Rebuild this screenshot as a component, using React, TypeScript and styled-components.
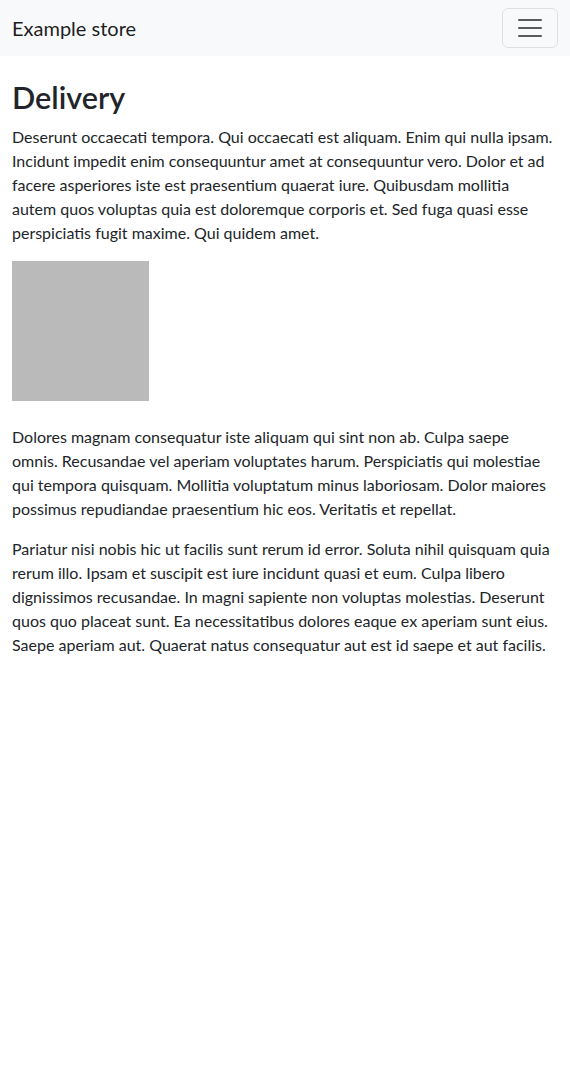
import React from "react";
import styled, { createGlobalStyle } from "styled-components";

const Global = createGlobalStyle`
  * { box-sizing: border-box; }
  body {
    margin: 0;
    font-family: Lato, "Noto Sans", sans-serif;
    font-size: 16px;
    line-height: 1.5;
    color: #212529;
    background: #fff;
  }
`;

const Navbar = styled.nav`
  height: 56px;
  background: #f8f9fa;
  display: flex;
  align-items: center;
  justify-content: space-between;
  padding: 0 12px;
`;

const Brand = styled.a`
  font-size: 20px;
  color: rgba(0, 0, 0, 0.9);
  text-decoration: none;
  line-height: 30px;
`;

const Toggler = styled.button`
  width: 56px;
  height: 40px;
  padding: 4px 12px;
  border: 1px solid rgba(0, 0, 0, 0.1);
  border-radius: 6px;
  background: transparent;
  display: flex;
  align-items: center;
  justify-content: center;
`;

const Container = styled.main`
  padding: 0 12px;
  margin-top: 24px;
`;

const Title = styled.h1`
  font-size: 30.55px;
  line-height: 1.2;
  font-weight: 600;
  margin: 0 0 8px;
`;

const Para = styled.p`
  margin: 0 0 16px;
`;

const Placeholder = styled.div`
  width: 137px;
  height: 140px;
  background: #bababa;
  margin-bottom: 24px;
`;

export default function App() {
  return (
    <>
      <Global />
      <Navbar>
        <Brand href="#">Example store</Brand>
        <Toggler aria-label="Toggle navigation">
          <svg width="30" height="30" viewBox="0 0 30 30">
            <path
              d="M4 7h22M4 15h22M4 23h22"
              stroke="rgba(33,37,41,0.75)"
              strokeWidth="2"
              strokeLinecap="round"
              strokeMiterlimit="10"
            />
          </svg>
        </Toggler>
      </Navbar>
      <Container>
        <Title>Delivery</Title>
        <Para>
          Deserunt occaecati tempora. Qui occaecati est aliquam. Enim qui nulla ipsam. Incidunt impedit enim
          consequuntur amet at consequuntur vero. Dolor et ad facere asperiores iste est praesentium quaerat iure.
          Quibusdam mollitia
          <br />
          autem quos voluptas quia est doloremque corporis et. Sed fuga quasi esse perspiciatis
          fugit maxime. Qui quidem amet.
        </Para>
        <Placeholder />
        <Para>
          Dolores magnam consequatur iste aliquam qui sint non ab. Culpa saepe omnis. Recusandae vel aperiam
          voluptates harum. Perspiciatis qui molestiae qui tempora quisquam. Mollitia voluptatum minus laboriosam.
          Dolor maiores possimus repudiandae praesentium hic eos. Veritatis et repellat.
        </Para>
        <Para>
          Pariatur nisi nobis hic ut facilis sunt rerum id error. Soluta nihil quisquam quia rerum illo. Ipsam et
          suscipit est iure incidunt quasi et eum. Culpa libero dignissimos recusandae. In magni sapiente non
          voluptas molestias. Deserunt quos quo placeat sunt. Ea necessitatibus dolores eaque ex aperiam sunt eius.
          Saepe aperiam aut. Quaerat natus consequatur aut est id saepe et aut facilis.
        </Para>
      </Container>
    </>
  );
}
